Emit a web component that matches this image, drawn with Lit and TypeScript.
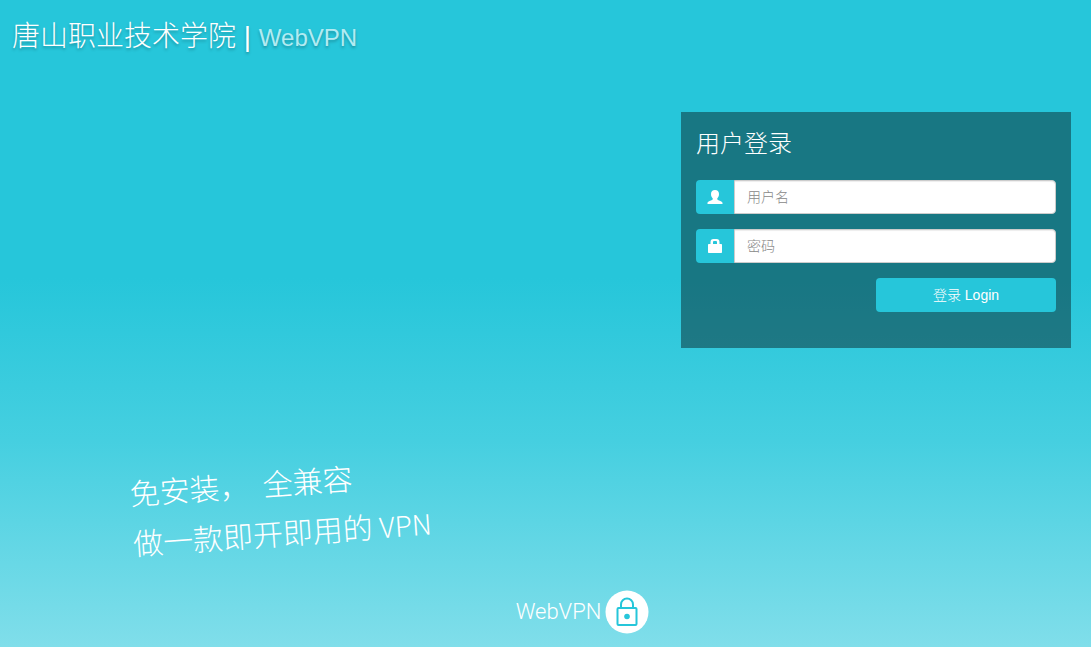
import { LitElement, html, css, svg } from "lit";
import { customElement } from "lit/decorators.js";

const userIcon = svg`<svg class="icon" viewBox="0 0 14 14" aria-hidden="true"><path d="M7 0C9.500 0 11 1.300 11 4C11 6 10.300 7.400 9.300 8.200V9.200C9.300 10.400 14.500 10.800 14.500 13V14H-0.500V13C-0.500 10.800 4.700 10.400 4.700 9.200V8.200C3.700 7.400 3 6 3 4C3 1.300 4.500 0 7 0Z"/></svg>`;
const lockIcon = svg`<svg class="icon" viewBox="0 0 14 14" aria-hidden="true"><path fill-rule="evenodd" d="M2.500 5V3C2.500 1 3.500 0 5.500 0H8.500C10.500 0 11.500 1 11.500 3V5H13.200Q14 5 14 5.800V13.200Q14 14 13.200 14H0.800Q0 14 0 13.200V5.800Q0 5 0.800 5ZM5 5H9V3Q9 2 8 2H6Q5 2 5 3Z"/></svg>`;

@customElement("login-card")
export class LoginCard extends LitElement {
  static styles = css`
    :host {
      display: block;
      box-sizing: border-box;
      width: 390px;
      max-width: 100%;
      padding: 16px 15px 36px;
      background: rgba(11, 46, 51, 0.52);
    }
    .title {
      margin: 0 0 20px;
      font-size: 24px;
      line-height: 32px;
      font-weight: 300;
      color: #fff;
    }
    .form {
      display: flex;
      flex-direction: column;
      gap: 15px;
    }
    .group {
      display: flex;
      height: 34px;
    }
    .addon {
      display: flex;
      align-items: center;
      justify-content: center;
      width: 38px;
      flex: none;
      color: #fff;
      background: #26c6da;
      border-radius: 4px 0 0 4px;
    }
    .icon {
      width: 14px;
      height: 14px;
      fill: currentColor;
      overflow: visible;
    }
    .input {
      flex: 1;
      min-width: 0;
      box-sizing: border-box;
      padding: 6px 12px;
      border: 1px solid #ccc;
      border-radius: 0 4px 4px 0;
      background: #fff;
      box-shadow: inset 0 1px 1px rgba(0, 0, 0, 0.075);
      font: 300 14px/20px "Liberation Sans", "Noto Sans CJK SC", sans-serif;
      color: #555;
    }
    .input::placeholder {
      color: #888;
      opacity: 1;
    }
    .submit {
      align-self: flex-end;
      width: 50%;
      height: 34px;
      border: 0;
      border-radius: 4px;
      background: #26c6da;
      color: #fff;
      font: 300 14px/20px "Liberation Sans", "Noto Sans CJK SC", sans-serif;
      cursor: pointer;
    }
  `;

  render() {
    return html`
      <h3 class="title">用户登录</h3>
      <form class="form" @submit=${(e: Event) => e.preventDefault()}>
        <div class="group">
          <label class="addon" for="user" aria-label="用户名">${userIcon}</label>
          <input class="input" id="user" type="text" placeholder="用户名" />
        </div>
        <div class="group">
          <label class="addon" for="pass" aria-label="密码">${lockIcon}</label>
          <input class="input" id="pass" type="password" placeholder="密码" />
        </div>
        <button class="submit" type="submit">登录 Login</button>
      </form>
    `;
  }
}

@customElement("app-root")
export class AppRoot extends LitElement {
  static styles = css`
    :host {
      display: flex;
      flex-direction: column;
      box-sizing: border-box;
      min-height: 100vh;
      overflow: hidden;
      font-family: "Liberation Sans", "Noto Sans CJK SC", sans-serif;
      color: #fff;
      background: linear-gradient(#26c6da 0%, #26c6da 43%, #45cfe0 68%, #80deea 100%);
    }
    .header {
      padding: 17px 12px 0;
    }
    .school {
      margin: 0;
      font-size: 28px;
      line-height: 40px;
      font-weight: 300;
      text-shadow: 0 2px 3px rgba(0, 0, 0, 0.25);
    }
    .product {
      font-size: 24px;
      color: #b2ebf2;
    }
    .main {
      display: flex;
      justify-content: flex-end;
      padding: 54px 20px 0;
    }
    .slogan {
      align-self: flex-start;
      margin: auto 0 32px 12%;
      padding: 0;
      font-family: "Noto Sans CJK SC", sans-serif;
      font-size: 30px;
      line-height: 50px;
      font-weight: 300;
      white-space: pre;
      transform: rotate(-4deg);
    }
    .latin {
      font-size: 28px;
    }
    .brand {
      display: flex;
      align-items: center;
      justify-content: center;
      gap: 4px;
      margin: 0 0 13px;
      padding-left: 74px;
      font-family: Roboto, sans-serif;
      font-size: 22px;
      line-height: 32px;
      font-weight: 300;
    }
    .badge {
      width: 44px;
      height: 44px;
    }
  `;

  render() {
    return html`
      <header class="header">
        <h1 class="school">唐山职业技术学院 | <span class="product">WebVPN</span></h1>
      </header>
      <main class="main"><login-card></login-card></main>
      <div class="slogan">免安装，  全兼容<br />做一款即开即用的 <span class="latin">VPN</span></div>
      <footer class="brand">
        <span>WebVPN</span>
        <svg class="badge" viewBox="0 0 44 44" aria-hidden="true">
          <circle cx="22" cy="22" r="21.500" fill="#fff" />
          <g fill="none" stroke="#26c6da" stroke-width="2">
            <rect x="12.500" y="18" width="19" height="17" rx="1" />
            <path d="M16 18V14.500A6 6 0 0 1 28 14.500V18" />
          </g>
          <circle cx="22" cy="26.500" r="2.800" fill="#26c6da" />
        </svg>
      </footer>
    `;
  }
}
